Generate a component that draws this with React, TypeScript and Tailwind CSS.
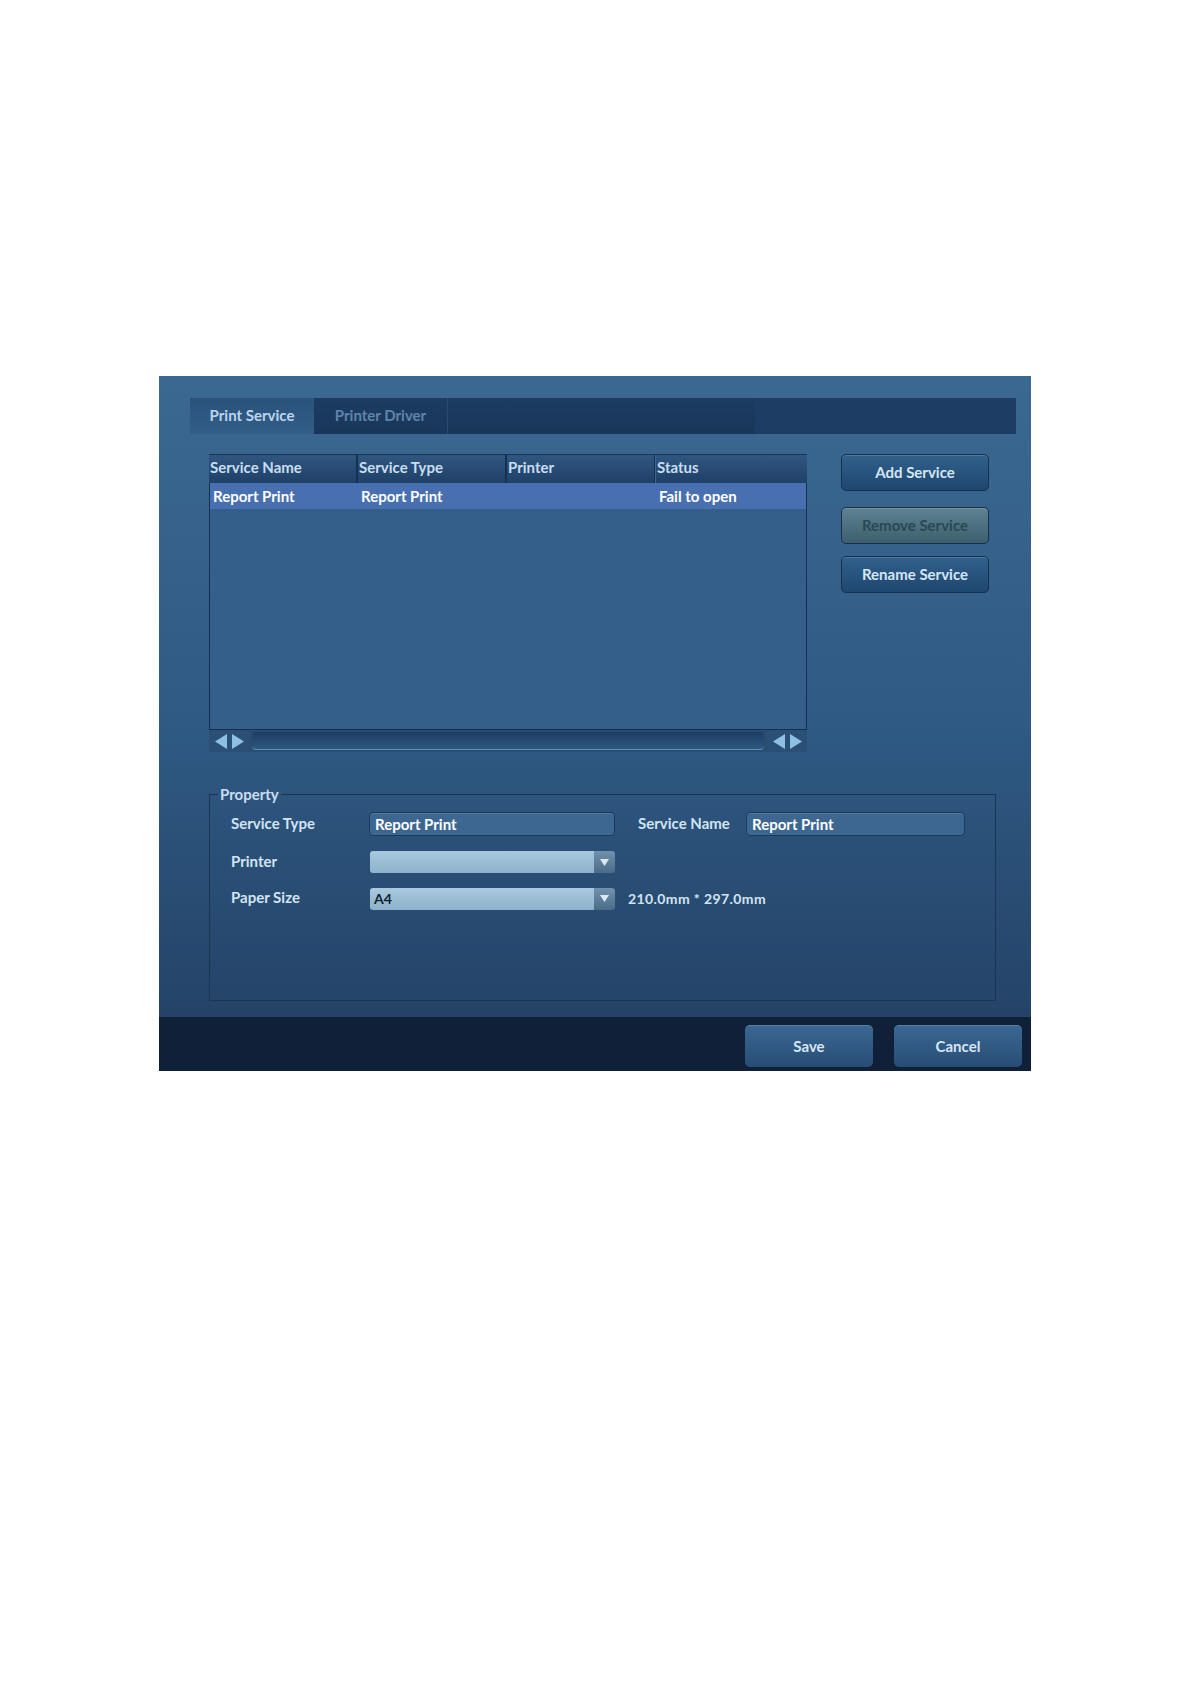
import React from "react";

const columns = ["Service Name", "Service Type", "Printer", "Status"];
const rows = [["Report Print", "Report Print", "", "Fail to open"]];

function ArrowPair() {
  return (
    <div className="flex h-full w-[40px] items-center justify-center gap-[5px] bg-[#2b5075]">
      <svg width="12" height="15" viewBox="0 0 12 15">
        <path d="M12 0 L0 7.5 L12 15 Z" fill="#8ec0e3" />
      </svg>
      <svg width="12" height="15" viewBox="0 0 12 15">
        <path d="M0 0 L12 7.5 L0 15 Z" fill="#8ec0e3" />
      </svg>
    </div>
  );
}

function ActionButton({ label, disabled }: { label: string; disabled?: boolean }) {
  return (
    <button
      type="button"
      className={
        disabled
          ? "h-[37px] w-[148px] rounded-[5px] border border-[#16304d] bg-gradient-to-b from-[#5e8392] to-[#3d5f6e] text-[15px] font-bold text-[#2a4852] shadow-[inset_0_1px_0_rgba(255,255,255,0.15)]"
          : "h-[37px] w-[148px] rounded-[5px] border border-[#16304d] bg-gradient-to-b from-[#31618d] to-[#1f466f] text-[15px] font-bold text-[#d5e6f4] shadow-[inset_0_1px_0_rgba(255,255,255,0.15)]"
      }
    >
      {label}
    </button>
  );
}

function TextField({ value, width }: { value: string; width: string }) {
  return (
    <div
      className={`${width} flex h-[24px] items-center rounded-[4px] border border-[#1d3a5b] bg-[#3d6690] pl-[5px] text-[15px] font-bold text-white shadow-[inset_0_1px_0_rgba(255,255,255,0.12)]`}
    >
      {value}
    </div>
  );
}

function SelectField({ value }: { value: string }) {
  return (
    <div className="flex h-[22px] w-[245px] overflow-hidden rounded-[3px]">
      <div className="flex flex-1 items-center bg-gradient-to-b from-[#a9c9de] to-[#8db2ca] pl-[4px] text-[14px] font-bold text-[#0f1f2e]">
        {value}
      </div>
      <div className="flex w-[21px] items-center justify-center bg-gradient-to-b from-[#7192ac] to-[#4b6c88]">
        <svg width="9" height="7" viewBox="0 0 9 7">
          <path d="M0 0 L9 0 L4.5 7 Z" fill="#dce9f3" />
        </svg>
      </div>
    </div>
  );
}

export default function App() {
  return (
    <div className="min-h-[1684px] bg-white pl-[159px] pt-[376px] font-[Lato,'Liberation_Sans',sans-serif]">
      <div className="flex h-[695px] w-[872px] flex-col bg-gradient-to-b from-[#3b6891] via-[#2f5a84] to-[#233f62]">
        <div className="flex-1 pl-[31px] pr-[14px] pt-[22px]">
          {/* tabs */}
          <div className="flex h-[36px] w-[826px] bg-[#1e3d64]">
            <div className="flex w-[565px] bg-gradient-to-b from-[#1d3c62] to-[#19365a]">
              <div className="flex w-[124px] items-center justify-center pb-[1px] bg-gradient-to-b from-[#2a527b] to-[#325e88] text-[15px] font-bold text-[#bcd6ee]">
                Print Service
              </div>
              <div className="flex w-[134px] items-center justify-center pb-[1px] border-r border-[#2a4a70] text-[15px] font-bold text-[#5f85aa]">
                Printer Driver
              </div>
            </div>
          </div>

          <div className="mt-[20px] flex pl-[19px]">
            {/* table */}
            <div className="w-[598px]">
              <div className="flex h-[29px] border-t border-[#1c3556] bg-gradient-to-b from-[#2f5780] to-[#1f4068]">
                {columns.map((col, i) => (
                  <div
                    key={col}
                    className={`flex items-center pb-[3px] text-[15px] font-bold text-[#c8def0] ${
                      i === 0 ? "w-[148px]" : i === 3 ? "flex-1 border-l border-[#3d6790]" : "w-[149px] border-l border-[#3d6790]"
                    } ${i < 3 ? "border-r border-[#16304d]" : ""}`}
                  >
                    <span className="pl-[1px]">{col}</span>
                  </div>
                ))}
              </div>
              <div className="h-[247px] border-x border-b border-[#162f4c] bg-[#335f8a]">
                {rows.map((row) => (
                  <div key={row[0]} className="flex h-[26px] bg-[#4870b1] text-[15px] font-bold text-white">
                    {row.map((cell, i) => (
                      <div
                        key={i}
                        className={`flex items-center pl-[3px] ${i === 0 ? "w-[148px]" : i === 3 ? "flex-1" : "w-[149px]"}`}
                      >
                        {cell}
                      </div>
                    ))}
                  </div>
                ))}
              </div>
              <div className="flex h-[22px] items-stretch bg-[#2a4d72]">
                <ArrowPair />
                <div className="mx-[3px] my-[2px] flex-1 rounded-[4px] border-b border-[#5f8db8] bg-gradient-to-b from-[#1d3e63] to-[#2e5880]" />
                <ArrowPair />
              </div>
            </div>

            {/* side buttons */}
            <div className="ml-[34px] flex flex-col">
              <ActionButton label="Add Service" />
              <div className="mt-[16px]">
                <ActionButton label="Remove Service" disabled />
              </div>
              <div className="mt-[12px]">
                <ActionButton label="Rename Service" />
              </div>
            </div>
          </div>

          {/* property */}
          <fieldset className="ml-[19px] mt-[34px] h-[215px] w-[787px] border border-[#1a3453] pl-[21px] pt-[10px]">
            <legend className="-ml-[13px] px-[2px] text-[15px] font-bold leading-[16px] text-[#c9def0]">Property</legend>
            <div className="flex h-[24px] items-center">
              <div className="w-[138px] pb-[2px] text-[15px] font-bold text-[#d2e4f3]">Service Type</div>
              <TextField value="Report Print" width="w-[246px]" />
              <div className="ml-[23px] w-[108px] pb-[2px] text-[15px] font-bold text-[#d2e4f3]">Service Name</div>
              <TextField value="Report Print" width="w-[219px]" />
            </div>
            <div className="mt-[15px] flex h-[22px] items-center">
              <div className="w-[139px] pb-[2px] text-[15px] font-bold text-[#d2e4f3]">Printer</div>
              <SelectField value="" />
            </div>
            <div className="mt-[14px] flex h-[23px] items-center">
              <div className="w-[139px] pb-[2px] text-[15px] font-bold text-[#d2e4f3]">Paper Size</div>
              <SelectField value="A4" />
              <div className="ml-[13px] text-[14px] font-bold tracking-[0.4px] text-[#d2e4f3]">210.0mm * 297.0mm</div>
            </div>
          </fieldset>
        </div>

        {/* footer */}
        <div className="flex h-[54px] items-start justify-end gap-[21px] bg-[#0f2038] pr-[9px] pt-[8px]">
          <button
            type="button"
            className="h-[42px] w-[128px] rounded-[5px] bg-gradient-to-b from-[#3a6893] to-[#284d75] text-[15px] font-bold text-[#d5e6f4] shadow-[inset_0_1px_0_rgba(255,255,255,0.15)]"
          >
            Save
          </button>
          <button
            type="button"
            className="h-[42px] w-[128px] rounded-[5px] bg-gradient-to-b from-[#3a6893] to-[#284d75] text-[15px] font-bold text-[#d5e6f4] shadow-[inset_0_1px_0_rgba(255,255,255,0.15)]"
          >
            Cancel
          </button>
        </div>
      </div>
    </div>
  );
}
